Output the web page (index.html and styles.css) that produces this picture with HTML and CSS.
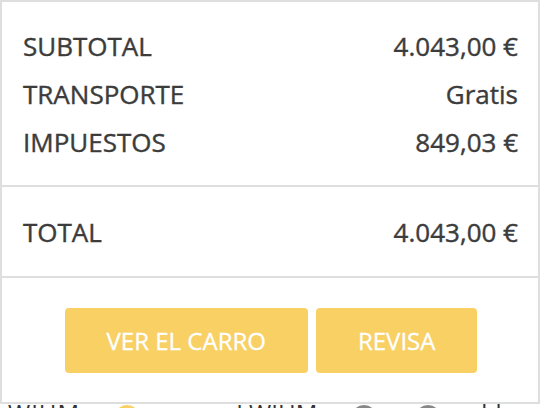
FILE: index.html
```html
<!DOCTYPE html>
<html lang="es">
<head>
<meta charset="utf-8">
<link rel="stylesheet" href="styles.css">
</head>
<body>
<div class="cart-summary">
  <div class="section lines">
    <div class="row"><span>SUBTOTAL</span><span>4.043,00 €</span></div>
    <div class="row"><span>TRANSPORTE</span><span>Gratis</span></div>
    <div class="row"><span>IMPUESTOS</span><span>849,03 €</span></div>
  </div>
  <div class="section total">
    <div class="row"><span>TOTAL</span><span>4.043,00 €</span></div>
  </div>
  <div class="section actions">
    <a class="btn">VER EL CARRO</a>
    <a class="btn">REVISA</a>
  </div>
</div>
<div class="peek">
  <span class="peek-text">WIHM</span>
  <span class="peek-dot yellow"></span>
  <span class="peek-text mid">I WIHM</span>
  <span class="peek-dot gray first"></span>
  <span class="peek-dot gray"></span>
  <span class="peek-text end">-  l l</span>
</div>
</body>
</html>
```
FILE: styles.css
```css
html, body {
  margin: 0;
  padding: 0;
  background: #fff;
  overflow: hidden;
}
body {
  font-family: "Open Sans", "Noto Sans", sans-serif;
  color: #3c3c3c;
  width: 542px;
  height: 408px;
}
.cart-summary {
  width: 536px;
  border: 2px solid #dedede;
  background: #fff;
}
.section + .section {
  border-top: 2px solid #dedede;
}
.row {
  display: flex;
  justify-content: space-between;
  font-size: 26px;
  font-weight: 400;
  line-height: 48px;
  -webkit-text-stroke: 0.4px #3c3c3c;
}
.lines {
  padding: 20px 20px 19px 21px;
}
.total {
  padding: 21px 20px 20px 21px;
}
.actions {
  display: flex;
  justify-content: center;
  gap: 8px;
  padding: 30px 0 29px 2px;
}
.btn {
  display: flex;
  align-items: center;
  height: 65px;
  padding: 0 42px;
  background: #f8d064;
  color: #fff;
  font-size: 24px;
  border-radius: 4px;
  text-decoration: none;
  -webkit-text-stroke: 0.3px #fff;
}
.peek {
  display: flex;
  align-items: flex-start;
  padding-top: 1px;
  height: 30px;
  font-size: 24px;
  line-height: 16px;
  color: #333;
}
.peek-text {
  margin-left: 8px;
  letter-spacing: 1px;
}
.peek-text.mid {
  margin-left: 96px;
  letter-spacing: 0;
}
.peek-text.end {
  margin-left: 24px;
}
.peek-dot {
  width: 26px;
  height: 26px;
  border-radius: 50%;
  margin-left: 34px;
}
.peek-dot.gray + .peek-dot.gray {
  margin-left: 38px;
}
.peek-dot.yellow { background: #f8d064; }
.peek-dot.gray { background: #888; }
```
